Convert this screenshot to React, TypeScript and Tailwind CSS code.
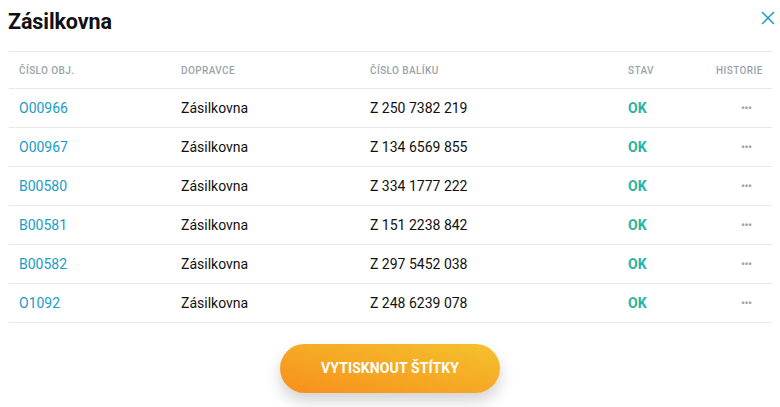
import { X } from "lucide-react";

const rows = [
  { id: "O00966", carrier: "Zásilkovna", parcel: "Z 250 7382 219" },
  { id: "O00967", carrier: "Zásilkovna", parcel: "Z 134 6569 855" },
  { id: "B00580", carrier: "Zásilkovna", parcel: "Z 334 1777 222" },
  { id: "B00581", carrier: "Zásilkovna", parcel: "Z 151 2238 842" },
  { id: "B00582", carrier: "Zásilkovna", parcel: "Z 297 5452 038" },
  { id: "O1092", carrier: "Zásilkovna", parcel: "Z 248 6239 078" },
];

const gridCols = "grid grid-cols-[162px_189px_258px_88px_1fr] items-center px-[10px]";

export default function App() {
  return (
    <div
      className="h-[407px] w-[780px] overflow-hidden bg-white"
      style={{ fontFamily: "Roboto, 'Liberation Sans', sans-serif" }}
    >
      <div className="flex h-[51px] items-start justify-between pl-[8px] pr-[1px] pt-[9px]">
        <h1 className="text-[21.5px] font-bold leading-[26px] tracking-[-0.1px] text-[#111]">
          Zásilkovna
        </h1>
        <button className="-mt-[2px] text-[#1a9fc0]">
          <X size={22} strokeWidth={1.7} />
        </button>
      </div>

      <div className="mx-[9px] w-[763px]">
        <div className={`${gridCols} h-[38px] border-y border-[#e9e9e9] text-[10px] font-medium uppercase tracking-[0.4px] text-[#98a4ab]`}>
          <div>Číslo obj.</div>
          <div>Dopravce</div>
          <div>Číslo balíku</div>
          <div>Stav</div>
          <div>Historie</div>
        </div>
        {rows.map((r) => (
          <div
            key={r.id}
            className={`${gridCols} h-[39px] border-b border-[#e9e9e9] text-[14px] text-[#111]`}
          >
            <div className="text-[#1a9dc3]">{r.id}</div>
            <div>{r.carrier}</div>
            <div>{r.parcel}</div>
            <div className="font-bold text-[#27b3a4]">OK</div>
            <div className="pl-[25px] text-[11px] font-bold leading-none tracking-[-0.5px] text-[#9aa6ae]">
              •••
            </div>
          </div>
        ))}
      </div>

      <div className="flex justify-center pt-[21px]">
        <button className="h-[49px] w-[220px] rounded-full bg-gradient-to-tr from-[#f78f1c] to-[#f3c22d] text-[14px] font-bold uppercase tracking-[0.1px] text-white shadow-[0_8px_16px_rgba(0,0,0,0.18)]">
          Vytisknout štítky
        </button>
      </div>
    </div>
  );
}
